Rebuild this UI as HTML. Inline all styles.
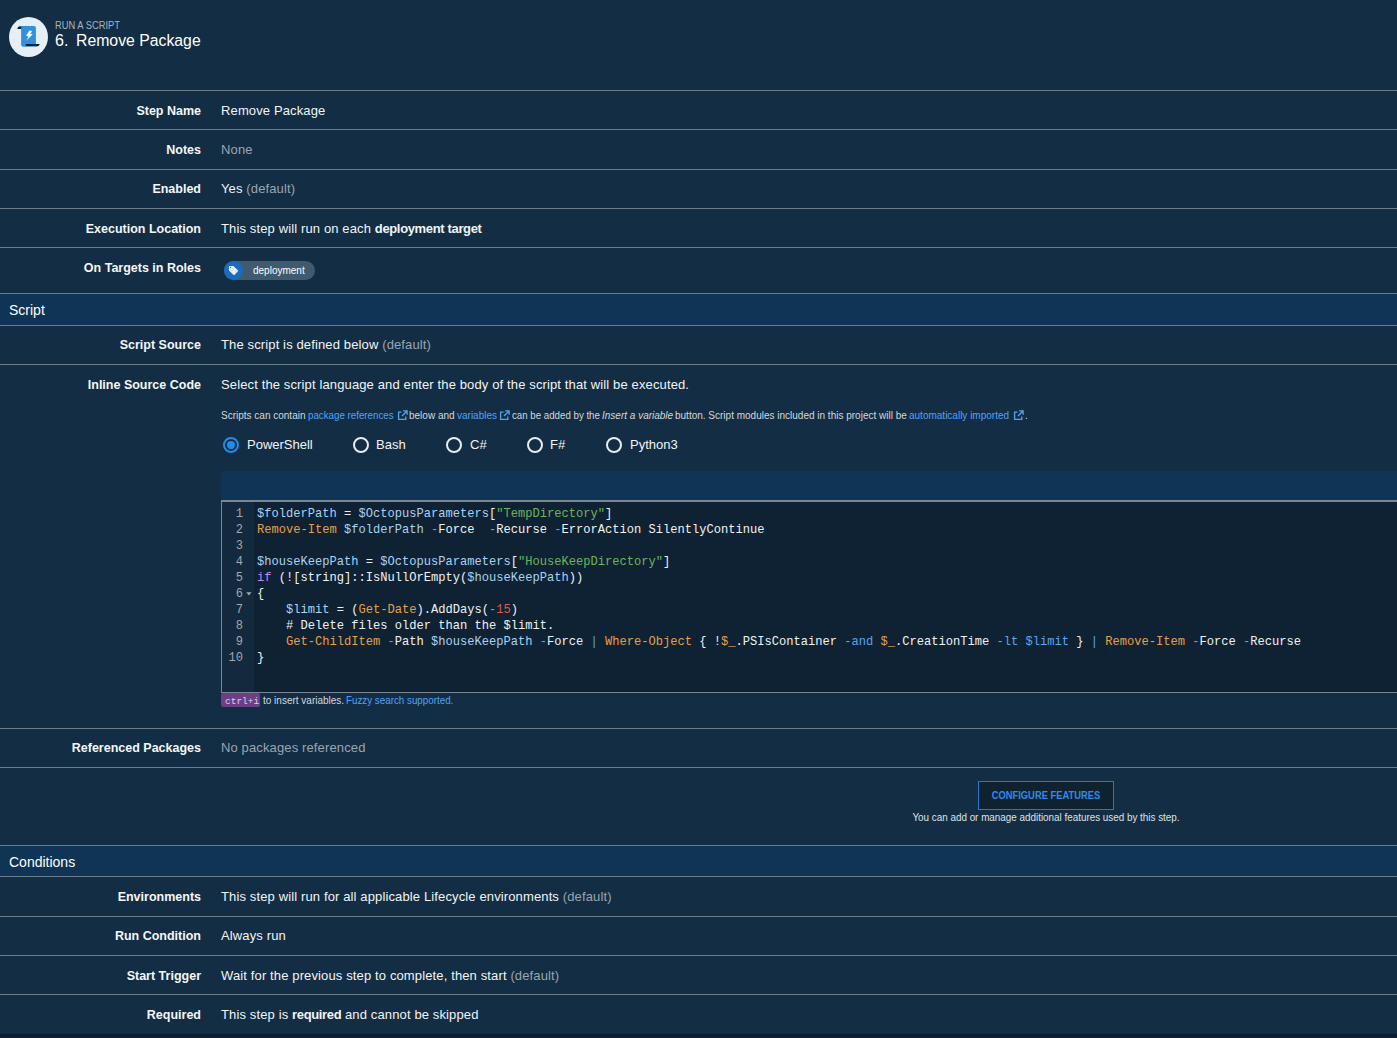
<!DOCTYPE html>
<html><head><meta charset="utf-8">
<style>
*{box-sizing:border-box;margin:0;padding:0}
html,body{width:1397px;height:1038px;overflow:hidden}
body{background:#132d44;font-family:"Liberation Sans",sans-serif;color:#f2f4f7;position:relative}
.abs{position:absolute}
.hl{position:absolute;left:0;width:1397px;height:1px;background:#6c7c88}
.sec{position:absolute;left:0;width:1397px;background:#0f3455}
.lbl{position:absolute;right:1196px;margin-top:1px;font-weight:bold;font-size:12.5px;white-space:nowrap;color:#f5f7fa}
.val{position:absolute;left:221px;font-size:13px;white-space:nowrap;color:#f2f4f7;letter-spacing:0.13px}
.val b{letter-spacing:-0.35px}
.mut{color:#9aa5b0}
b{font-weight:bold}
.t{line-height:1;display:block}
.desc{font-size:10px;color:#d3d9de;white-space:nowrap}
.lnk{color:#4fa3f7}
.radio{width:16px;height:16px;border-radius:50%;border:2px solid #e8edf2}
.radio.on{border-color:#1e8ce8}
.radio.on i{position:absolute;left:2px;top:2px;width:8px;height:8px;border-radius:50%;background:#1e8ce8}
.rlab{font-size:13px;color:#f2f4f7;white-space:nowrap}
.gut{width:21px;text-align:right;font-family:"Liberation Mono",monospace;font-size:12px;line-height:16px;color:#a0a8b0}
.code{font-family:"Liberation Mono",monospace;font-size:12.08px;line-height:16px;color:#f0f2f4;white-space:pre}
.code .v{color:#a9d2f3}
.code .s{color:#6cb45a}
.code .c{color:#e6a046}
.code .k{color:#c08ae8}
.code .o{color:#5aa5ee}
.code .n{color:#dc5a50}
</style></head>
<body>
<!-- header -->
<div class="abs" style="left:9px;top:17px;width:39px;height:40px;border-radius:50%;background:#e6eef6"></div>
<svg class="abs" style="left:0;top:0" width="60" height="60" viewBox="0 0 60 60">
  <path d="M19.1 26 L34 26 Q35.9 26 35.9 27.9 L35.9 44.05 L37.6 44.05 L37.6 46.8 L23.3 46.8 Q21.14 46.8 21.14 44 L21.14 28.9 L19.1 28.9 Z" fill="#3191dc"/>
  <path d="M17.1 28.9 L18.3 26.76 L21.27 26.76 L21.27 28.9 Z" fill="#131b24"/>
  <path d="M25.78 44.05 L39.8 44.05 L38.6 46.06 L25.78 46.06 Z" fill="#18222d"/>
  <path d="M29.66 30.27 L32.04 31.4 L30.04 34.03 L32.8 34.28 L26.15 40.8 L28.53 36.66 L26.15 35.53 Z" fill="#ffffff"/>
</svg>
<div class="abs t" style="left:55px;top:20.5px;font-size:10px;color:#a9b4bf;transform:scaleX(0.935);transform-origin:0 0">RUN A SCRIPT</div>
<div class="abs t" style="left:55px;top:33px;font-size:16px;color:#fff">6.</div><div class="abs t" style="left:76px;top:33px;font-size:15.8px;color:#fff">Remove Package</div>

<div class="hl" style="top:90px"></div>
<!-- rows -->
<div class="lbl t" style="top:104px">Step Name</div>
<div class="val t" style="top:104px">Remove Package</div>
<div class="hl" style="top:129px"></div>
<div class="lbl t" style="top:143px">Notes</div>
<div class="val t mut" style="top:143px">None</div>
<div class="hl" style="top:169px"></div>
<div class="lbl t" style="top:182px">Enabled</div>
<div class="val t" style="top:182px">Yes <span class="mut">(default)</span></div>
<div class="hl" style="top:208px"></div>
<div class="lbl t" style="top:222px">Execution Location</div>
<div class="val t" style="top:222px">This step will run on each <b>deployment target</b></div>
<div class="hl" style="top:247px"></div>
<div class="lbl t" style="top:261px">On Targets in Roles</div>
<div class="abs" style="left:224px;top:261px;width:91px;height:19px;border-radius:10px;background:#405a70"></div>
<div class="abs" style="left:224px;top:261px;width:19px;height:19px;border-radius:50%;background:#1a6bbf"></div>
<svg class="abs" style="left:227.6px;top:264.6px" width="11" height="11" viewBox="0 0 24 24"><path d="M21.41 11.58l-9-9C12.05 2.22 11.55 2 11 2H4c-1.1 0-2 .9-2 2v7c0 .55.22 1.05.59 1.42l9 9c.36.36.86.58 1.41.58.55 0 1.05-.22 1.41-.59l7-7c.37-.36.59-.86.59-1.41 0-.55-.23-1.06-.59-1.42zM5.5 7C4.67 7 4 6.33 4 5.5S4.67 4 5.5 4 7 4.67 7 5.5 6.33 7 5.5 7z" fill="#e8eef5"/></svg>
<div class="abs t" style="left:253px;top:266px;font-size:10px;color:#fff">deployment</div>
<div class="hl" style="top:293px"></div>
<div class="sec" style="top:294px;height:31px"></div>
<div class="abs t" style="left:9px;top:303px;font-size:14px;color:#fff">Script</div>
<div class="hl" style="top:325px"></div>
<div class="lbl t" style="top:338px">Script Source</div>
<div class="val t" style="top:338px">The script is defined below <span class="mut">(default)</span></div>
<div class="hl" style="top:364px"></div>
<div class="lbl t" style="top:378px">Inline Source Code</div>
<div class="val t" style="top:378px">Select the script language and enter the body of the script that will be executed.</div>

<!-- description -->
<div class="abs t desc" style="left:221px;top:411px">Scripts can contain</div>
<div class="abs t desc lnk" style="left:308px;top:411px;transform:scaleX(0.975);transform-origin:0 0">package references</div>
<svg class="abs" style="left:397px;top:410px" width="11" height="11" viewBox="0 0 11 11"><path d="M4.5 2.2H1.6V9.4H8.8V6.5" fill="none" stroke="#4fa3f7" stroke-width="1.3"/><path d="M6.2 0.9H10.1V4.8M10 1L5 6" fill="none" stroke="#4fa3f7" stroke-width="1.3"/></svg>
<div class="abs t desc" style="left:409px;top:411px">below and</div>
<div class="abs t desc lnk" style="left:457px;top:411px">variables</div>
<svg class="abs" style="left:499px;top:410px" width="11" height="11" viewBox="0 0 11 11"><path d="M4.5 2.2H1.6V9.4H8.8V6.5" fill="none" stroke="#4fa3f7" stroke-width="1.3"/><path d="M6.2 0.9H10.1V4.8M10 1L5 6" fill="none" stroke="#4fa3f7" stroke-width="1.3"/></svg>
<div class="abs t desc" style="left:512px;top:411px;transform:scaleX(0.97);transform-origin:0 0">can be added by the</div>
<div class="abs t desc" style="left:602px;top:411px;font-style:italic">Insert a variable</div>
<div class="abs t desc" style="left:675px;top:411px">button. Script modules included in this project will be</div>
<div class="abs t desc lnk" style="left:909px;top:411px">automatically imported</div>
<svg class="abs" style="left:1013px;top:410px" width="11" height="11" viewBox="0 0 11 11"><path d="M4.5 2.2H1.6V9.4H8.8V6.5" fill="none" stroke="#4fa3f7" stroke-width="1.3"/><path d="M6.2 0.9H10.1V4.8M10 1L5 6" fill="none" stroke="#4fa3f7" stroke-width="1.3"/></svg>
<div class="abs t desc" style="left:1025px;top:411px">.</div>
<!-- radios -->
<div class="abs radio on" style="left:222.5px;top:437px"><i></i></div>
<div class="abs t rlab" style="left:247px;top:438px">PowerShell</div>
<div class="abs radio" style="left:352.5px;top:437px"></div>
<div class="abs t rlab" style="left:376px;top:438px">Bash</div>
<div class="abs radio" style="left:445.5px;top:437px"></div>
<div class="abs t rlab" style="left:470px;top:438px">C#</div>
<div class="abs radio" style="left:526.5px;top:437px"></div>
<div class="abs t rlab" style="left:550px;top:438px">F#</div>
<div class="abs radio" style="left:605.5px;top:437px"></div>
<div class="abs t rlab" style="left:630px;top:438px">Python3</div>
<!-- editor -->
<div class="abs" style="left:221px;top:471px;width:1176px;height:29px;background:#0f3455"></div>
<div class="abs" style="left:221px;top:500px;width:1176px;height:193px;border:1px solid #7a8792;border-top:2px solid #7a8792;border-right:none;background:#0f2233"></div>
<div class="abs" style="left:222px;top:502px;width:32px;height:190px;background:#132a3e"></div>
<div class="abs gut" style="left:222px;top:506px">1<br>2<br>3<br>4<br>5<br>6<br>7<br>8<br>9<br>10</div>
<svg class="abs" style="left:245px;top:589.5px" width="8" height="8" viewBox="0 0 8 8"><path d="M1.3 2.2H6.5L3.9 5.6Z" fill="#a0a8b0"/></svg>
<pre class="abs code" style="left:257px;top:506px"><span class="v">$folderPath</span> = <span class="v">$OctopusParameters</span>[<span class="s">"TempDirectory"</span>]
<span class="c">Remove-Item</span> <span class="v">$folderPath</span> <span class="o">-</span>Force  <span class="o">-</span>Recurse <span class="o">-</span>ErrorAction SilentlyContinue

<span class="v">$houseKeepPath</span> = <span class="v">$OctopusParameters</span>[<span class="s">"HouseKeepDirectory"</span>]
<span class="k">if</span> (![string]::IsNullOrEmpty(<span class="v">$houseKeepPath</span>))
{
    <span class="v">$limit</span> = (<span class="c">Get-Date</span>).AddDays(<span class="o">-</span><span class="n">15</span>)
    # Delete files older than the $limit.
    <span class="c">Get-ChildItem</span> <span class="o">-</span>Path <span class="v">$houseKeepPath</span> <span class="o">-</span>Force <span class="o">|</span> <span class="c">Where-Object</span> { !<span class="c">$_</span>.PSIsContainer <span class="o">-and</span> <span class="c">$_</span>.CreationTime <span class="o">-lt</span> <span class="o">$limit</span> } <span class="o">|</span> <span class="c">Remove-Item</span> <span class="o">-</span>Force <span class="o">-</span>Recurse
}</pre>
<div class="abs" style="left:221px;top:693px;width:39px;height:14px;background:#6a4084;border-radius:2px"></div>
<div class="abs t" style="left:225px;top:696.5px;font-family:'Liberation Mono',monospace;font-size:9.5px;color:#e0cce8">ctrl+i</div>
<div class="abs t desc" style="left:263px;top:696px">to insert variables.</div>
<div class="abs t desc lnk" style="left:346px;top:696px;transform:scaleX(0.98);transform-origin:0 0">Fuzzy search supported.</div>
<div class="hl" style="top:728px"></div>
<div class="lbl t" style="top:741px">Referenced Packages</div>
<div class="val t mut" style="top:741px">No packages referenced</div>
<div class="hl" style="top:767px"></div>

<div class="abs" style="left:978px;top:781px;width:136px;height:29px;border:1px solid #1f7ad6;background:#10222f"></div>
<div class="abs t" style="left:978px;width:136px;top:791px;text-align:center;font-weight:bold;font-size:10px;color:#2d8ceb;transform:scaleX(0.937)">CONFIGURE FEATURES</div>
<div class="abs t" style="left:878px;width:336px;top:813px;text-align:center;font-size:10px;color:#dde3e8;transform:scaleX(0.986)">You can add or manage additional features used by this step.</div>
<div class="hl" style="top:845px"></div>
<div class="sec" style="top:846px;height:30px"></div>
<div class="abs t" style="left:9px;top:855px;font-size:14px;color:#fff">Conditions</div>
<div class="hl" style="top:876px"></div>
<div class="lbl t" style="top:890px">Environments</div>
<div class="val t" style="top:890px">This step will run for all applicable Lifecycle environments <span class="mut">(default)</span></div>
<div class="hl" style="top:916px"></div>
<div class="lbl t" style="top:929px">Run Condition</div>
<div class="val t" style="top:929px">Always run</div>
<div class="hl" style="top:955px"></div>
<div class="lbl t" style="top:969px">Start Trigger</div>
<div class="val t" style="top:969px">Wait for the previous step to complete, then start <span class="mut">(default)</span></div>
<div class="hl" style="top:994px"></div>
<div class="lbl t" style="top:1008px">Required</div>
<div class="val t" style="top:1008px">This step is <b>required</b> and cannot be skipped</div>
<div class="abs" style="left:0;top:1034px;width:1397px;height:4px;background:#0d1e2d"></div>
</body></html>
